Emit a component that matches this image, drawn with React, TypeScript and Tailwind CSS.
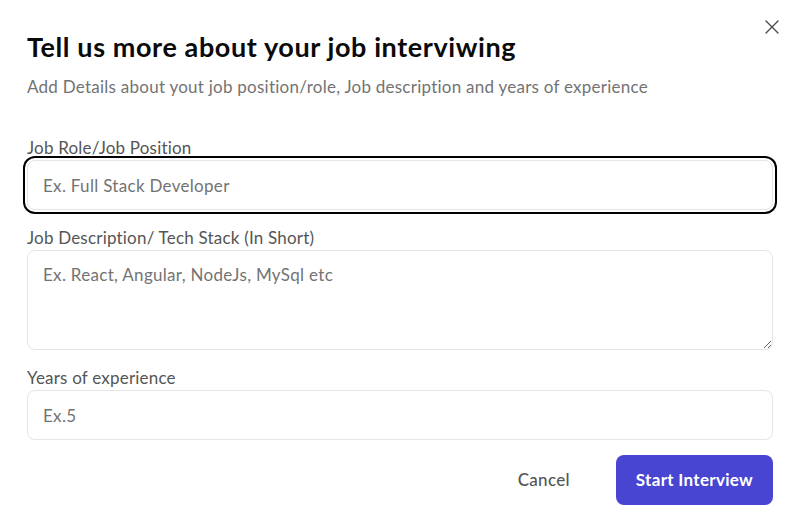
import { useState } from "react";

function CloseIcon() {
  return (
    <svg width="14" height="14" viewBox="0 0 14 14" fill="none" stroke="#4b4b4b" strokeWidth="1.4" strokeLinecap="round">
      <path d="M1 1l12 12M13 1L1 13" />
    </svg>
  );
}

const fieldClass =
  "w-full rounded-lg border border-[#e5e5e5] bg-white pl-[15px] pr-4 text-[17px] tracking-[0.3px] text-[#171717] outline-none placeholder:text-[#737373]";

const labelClass = "text-[17px] leading-[24px] tracking-[0.2px] text-[#555555]";

export default function App() {
  const [role, setRole] = useState("");
  const [desc, setDesc] = useState("");
  const [years, setYears] = useState("");

  return (
    <div className="relative h-[530px] w-[799px] bg-white pl-[27px] pr-[26px] pt-[30px] font-['Lato','Liberation_Sans',sans-serif]">
      <button className="absolute right-[20px] top-[20px] p-0" aria-label="Close">
        <CloseIcon />
      </button>

      <h2 className="text-[27px] font-bold leading-[33px] tracking-[0.6px] text-[#0a0a0a]">
        Tell us more about your job interviwing
      </h2>
      <p className="mt-[12px] text-[17px] leading-[24px] tracking-[0.25px] text-[#737373]">
        Add Details about yout job position/role, Job description and years of experience
      </p>

      <form className="mt-[37px] flex flex-col gap-4" onSubmit={(e) => e.preventDefault()}>
        <div className="flex flex-col">
          <label className={labelClass}>Job Role/Job Position</label>
          <input
            value={role}
            onChange={(e) => setRole(e.target.value)}
            placeholder="Ex. Full Stack Developer"
            className={fieldClass + " h-[50px] ring-2 ring-black ring-offset-2"}
          />
        </div>

        <div className="flex flex-col">
          <label className={labelClass}>Job Description/ Tech Stack (In Short)</label>
          <textarea
            value={desc}
            onChange={(e) => setDesc(e.target.value)}
            placeholder="Ex. React, Angular, NodeJs, MySql etc"
            className={fieldClass + " block h-[100px] py-3 leading-[24px]"}
          />
        </div>

        <div className="flex flex-col">
          <label className={labelClass}>Years of experience</label>
          <input
            type="number"
            value={years}
            onChange={(e) => setYears(e.target.value)}
            placeholder="Ex.5"
            className={fieldClass + " h-[50px]"}
          />
        </div>

        <div className="mt-[-1px] flex items-center justify-end gap-[26px]">
          <button type="button" className="h-[50px] px-5 text-[17px] font-medium tracking-[0.3px] text-[#555555]">
            Cancel
          </button>
          <button type="submit" className="h-[50px] rounded-lg bg-[#4845d2] px-5 text-[17px] font-bold tracking-[0.3px] text-white">
            Start Interview
          </button>
        </div>
      </form>
    </div>
  );
}
